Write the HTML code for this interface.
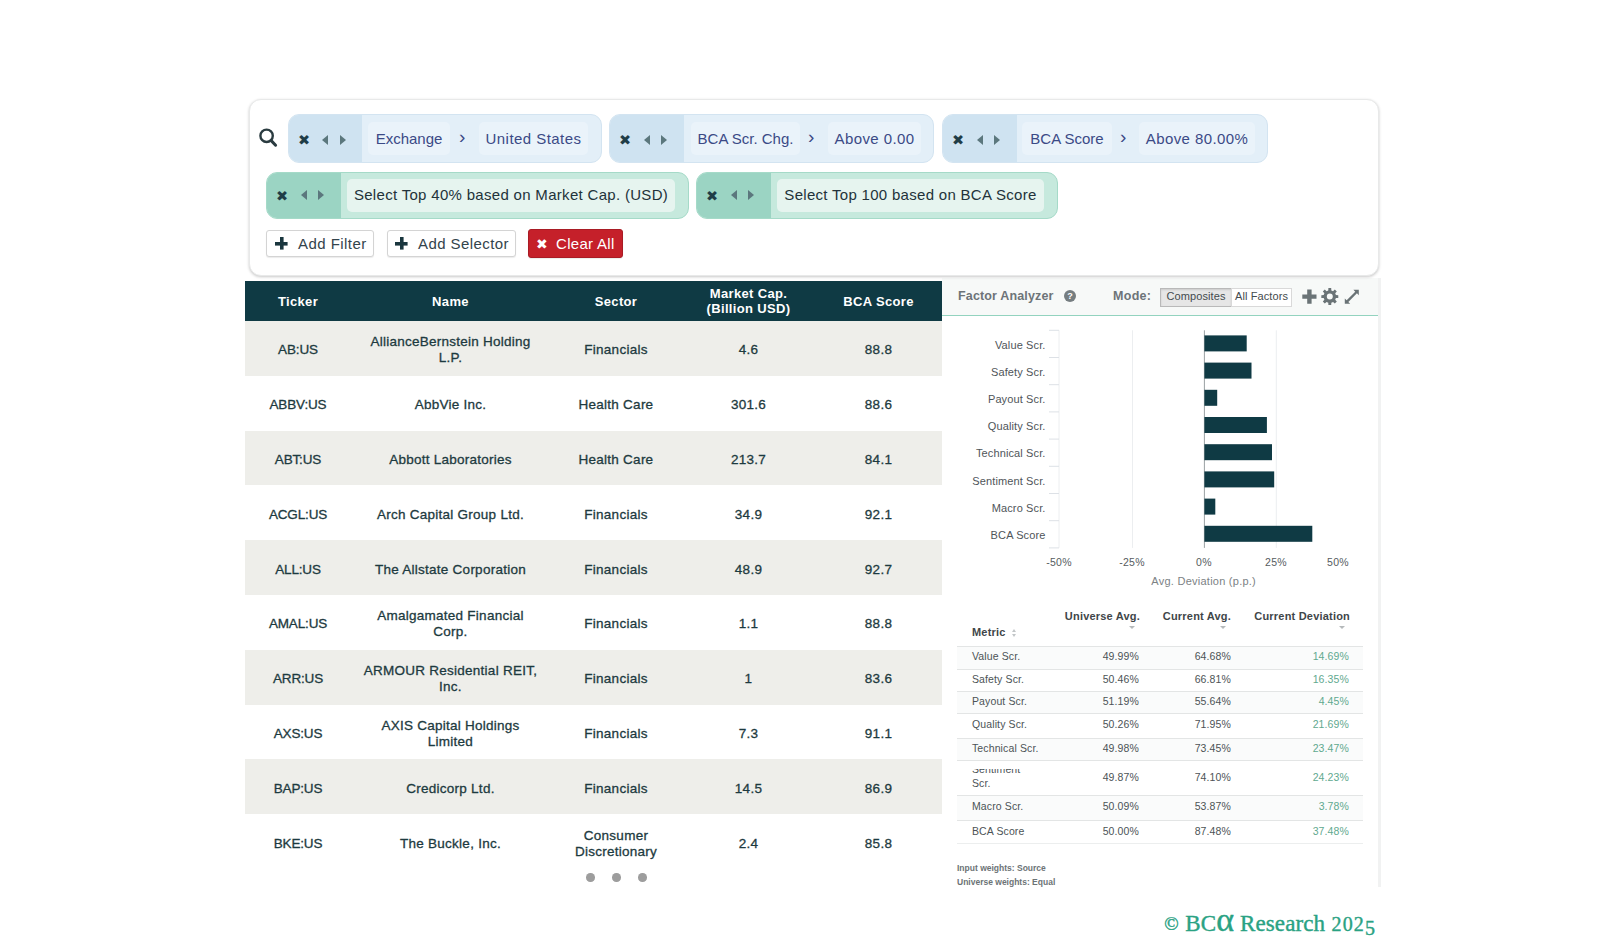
<!DOCTYPE html>
<html><head><meta charset="utf-8">
<style>
*{box-sizing:border-box;margin:0;padding:0}
html,body{width:1600px;height:949px;background:#fff;overflow:hidden}
body{position:relative;font-family:"Liberation Sans",sans-serif;color:#1d3a40}
.abs{position:absolute}
#fpanel{left:249px;top:99px;width:1130px;height:177px;border:1px solid #e8e9e9;border-radius:12px;background:#fff;box-shadow:0 1px 3px rgba(0,0,0,.22)}
.pill{position:absolute;height:49px;border-radius:11px;overflow:hidden}
.pill.b{background:#e3eff8;border:1px solid #d3e4f1}
.pill.g{background:#c6e9dd;border:1px solid #a5dac8;height:47px}.pill.g .chip{top:6px;line-height:31px}.pill.g .ic{line-height:47px}.pill.g .ic.tl,.pill.g .ic.tr{top:17px}
.pill .ctl{position:absolute;left:0;top:0;bottom:0}
.pill.b .ctl{background:#cfe3f1}
.pill.g .ctl{background:#9bd4c3}
.chip{position:absolute;height:33px;border-radius:5px;font-size:15px;line-height:34px;text-align:center;white-space:nowrap}
.pill.b .chip{background:#eaf3fa;color:#3b4a86}
.pill.g .chip{background:#e6f4ef;color:#22323a}
.sep{position:absolute;color:#3b4a86;font-size:19px;line-height:31px;margin-left:-1px}
.btn{position:absolute;height:27px;border:1px solid #d4d4d4;border-radius:3px;background:#fff;font-size:15px;line-height:25px;color:#33444c;white-space:nowrap;box-shadow:0 1px 1px rgba(0,0,0,.08)}
.btn.red{background:#c5202a;border-color:#a91b24;color:#fff;height:29px;line-height:27px}
table#main{position:absolute;left:245px;top:281px;width:697px;border-collapse:collapse;table-layout:fixed;font-size:13.5px;letter-spacing:.25px}
#main th{background:#0f3a44;color:#fff;font-weight:bold;height:40px;font-size:13px;letter-spacing:.35px;line-height:15px;text-align:center;vertical-align:middle}
#main td{height:54.8px;padding-top:4px;text-align:center;vertical-align:middle;line-height:16px;color:#1d3a40;-webkit-text-stroke:.3px #1d3a40}
#main tr:nth-child(even) td{background:#eeeeea}
#main td:first-child{letter-spacing:-.15px}

.ic{position:absolute;top:0;height:47px;line-height:51px;font-size:14.5px;color:#1f3d47}
.ic.x{font-family:"DejaVu Sans",sans-serif}
.ic.tl,.ic.tr{top:20px;width:0;height:0;border-top:5.5px solid transparent;border-bottom:5.5px solid transparent}
.ic.tl{border-right:6.5px solid #5b777d}
.ic.tr{border-left:6.5px solid #5b777d}
.pill .chip{top:7px}
.pill .sep{top:6px}
.bt{position:absolute;top:0}
.plus{position:absolute;top:6px;width:13px;height:13px;background:linear-gradient(#1a363e,#1a363e) center/12.6px 3.6px no-repeat,linear-gradient(#1a363e,#1a363e) center/3.6px 12.6px no-repeat}

.rh{font-size:12.5px;font-weight:bold;color:#6d7478;line-height:16px;white-space:nowrap}
.qm{width:12px;height:12px;border-radius:50%;background:#757d80;color:#fff;font-size:9px;font-weight:bold;line-height:12px;text-align:center}
.mb{height:19px;border:1px solid #d9d9d9;background:#fff;font-size:11px;letter-spacing:.1px;line-height:15px;text-align:center;color:#444b4e;white-space:nowrap}
.mb.on{background:#e6e6e6;border-color:#b9b9b9;box-shadow:inset 0 1px 2px rgba(0,0,0,.12)}
#ftab{font-size:10.5px;letter-spacing:.12px;color:#4c5356}
#ftab span{position:absolute;white-space:nowrap}
.fh{font-weight:bold;font-size:11px;letter-spacing:.2px;color:#3f4649;line-height:13px}
.clip{position:absolute;left:0;top:8px;width:120px;height:26px;overflow:hidden}
.clip .c0{left:15px}
.fr{position:absolute;left:0;right:0;border-top:1px solid #e3e5e5}
.fr.odd{background:#fafbfb}
.fr .c0{left:15px}.fr .c1{right:224px}.fr .c2{right:132px}.fr .c3{right:14px;color:#5fa98f}
#ftab{border-bottom:0}
.ca{position:absolute;right:5px;top:16px;border-left:3px solid transparent;border-right:3px solid transparent;border-top:3px solid #b5b9bb}
.so{display:inline-block;position:relative;width:6px;height:8px;margin-left:3px;top:1px}
.so:before,.so:after{content:'';position:absolute;left:0;border-left:2.5px solid transparent;border-right:2.5px solid transparent}
.so:before{top:0;border-bottom:3px solid #c2c6c8}
.so:after{top:4.5px;border-top:3px solid #c2c6c8}
.fn{font-size:8.5px;font-weight:bold;color:#6c7376;line-height:11px;white-space:nowrap}
.dot{width:8.6px;height:8.6px;border-radius:50%;background:#9d9d9d}
#foot{font-family:"Liberation Serif",serif;font-size:23px;letter-spacing:.1px;word-spacing:.6px;line-height:30px;color:#2aa283;white-space:nowrap;-webkit-text-stroke:.4px #2aa283}
#foot .cp{font-size:19px;position:relative;top:-1px}
#foot .al{font-size:34px;line-height:0;letter-spacing:-.5px}
#foot .os{font-size:20px;letter-spacing:1.1px}
#foot .d5{position:relative;top:4px}
</style></head><body>
<div class="abs" id="rpanel" style="left:942px;top:278px;width:439px;height:609px;border-right:3px solid #f1f2f2;background:#fff"></div>
<div class="abs" id="rhead" style="left:942px;top:278px;width:436px;height:38px;background:#f7f9f8;border-bottom:1.5px solid #93d3bf"></div>
<div id="fpanel" class="abs"></div>
<svg class="abs" style="left:258px;top:127px" width="20" height="21" viewBox="0 0 20 21"><circle cx="8.6" cy="8.8" r="6.2" fill="none" stroke="#2a3b40" stroke-width="2.4"/><path d="M13.2 13.6 L17.6 18.2" stroke="#2a3b40" stroke-width="3" stroke-linecap="round"/></svg>

<div class="pill b" style="left:288px;top:114px;width:314px"><div class="ctl" style="width:73px"></div>
<span class="ic x" style="left:9px">&#10006;</span><span class="ic tl" style="left:33px"></span><span class="ic tr" style="left:51px"></span>
<div class="chip" style="left:79px;width:82px"><span style="letter-spacing:0">Exchange</span></div><span class="sep" style="left:171px">&#8250;</span>
<div class="chip" style="left:190px;width:109px"><span style="letter-spacing:.45px">United States</span></div></div>

<div class="pill b" style="left:609px;top:114px;width:325px"><div class="ctl" style="width:74px"></div>
<span class="ic x" style="left:9px">&#10006;</span><span class="ic tl" style="left:34px"></span><span class="ic tr" style="left:51px"></span>
<div class="chip" style="left:81px;width:109px"><span>BCA Scr. Chg.</span></div><span class="sep" style="left:199px">&#8250;</span>
<div class="chip" style="left:218px;width:93px"><span style="letter-spacing:.4px">Above 0.00</span></div></div>

<div class="pill b" style="left:942px;top:114px;width:326px"><div class="ctl" style="width:74px"></div>
<span class="ic x" style="left:9px">&#10006;</span><span class="ic tl" style="left:34px"></span><span class="ic tr" style="left:51px"></span>
<div class="chip" style="left:79px;width:90px"><span>BCA Score</span></div><span class="sep" style="left:178px">&#8250;</span>
<div class="chip" style="left:196px;width:116px"><span style="letter-spacing:.4px">Above 80.00%</span></div></div>

<div class="pill g" style="left:266px;top:172px;width:423px"><div class="ctl" style="width:74px"></div>
<span class="ic x" style="left:9px">&#10006;</span><span class="ic tl" style="left:34px"></span><span class="ic tr" style="left:51px"></span>
<div class="chip" style="left:80px;width:328px"><span style="letter-spacing:.31px">Select Top 40% based on Market Cap. (USD)</span></div></div>

<div class="pill g" style="left:696px;top:172px;width:362px"><div class="ctl" style="width:74px"></div>
<span class="ic x" style="left:9px">&#10006;</span><span class="ic tl" style="left:34px"></span><span class="ic tr" style="left:51px"></span>
<div class="chip" style="left:80px;width:267px"><span style="letter-spacing:.3px">Select Top 100 based on BCA Score</span></div></div>

<div class="btn" style="left:266px;top:230px;width:108px"><span class="plus" style="left:8px"></span><span class="bt" style="left:31px;letter-spacing:.45px">Add Filter</span></div>
<div class="btn" style="left:387px;top:230px;width:129px"><span class="plus" style="left:7px"></span><span class="bt" style="left:30px;letter-spacing:.42px">Add Selector</span></div>
<div class="btn red" style="left:528px;top:229px;width:95px"><span class="bt" style="left:7px;top:1px;font-size:14px;font-family:DejaVu Sans,sans-serif">&#10006;</span><span class="bt" style="left:27px;letter-spacing:.3px">Clear All</span></div>


<span class="abs rh" style="left:958px;top:288px;letter-spacing:.15px">Factor Analyzer</span>
<span class="abs qm" style="left:1064px;top:290px">?</span>
<span class="abs rh" style="left:1113px;top:288px;letter-spacing:.3px">Mode:</span>
<div class="abs mb on" style="left:1160px;top:288px;width:72px">Composites</div>
<div class="abs mb" style="left:1231px;top:288px;width:61px">All Factors</div>
<svg class="abs" style="left:1301px;top:288px" width="60" height="18" viewBox="0 0 60 18" fill="#6a7376">
<path d="M6.2 1.5h4.400v4.900h4.900v4.400h-4.900v4.900h-4.400v-4.900H1.300v-4.400h4.900z"/>
<path d="M34.91 7.08 L37.28 7.19 L37.28 10.01 L34.91 10.12 L34.20 11.85 L35.80 13.60 L33.80 15.60 L32.05 14.00 L30.32 14.71 L30.21 17.08 L27.39 17.08 L27.28 14.71 L25.55 14.00 L23.80 15.60 L21.80 13.60 L23.40 11.85 L22.69 10.12 L20.32 10.01 L20.32 7.19 L22.69 7.08 L23.40 5.35 L21.80 3.60 L23.80 1.60 L25.55 3.20 L27.28 2.49 L27.39 0.12 L30.21 0.12 L30.32 2.49 L32.05 3.20 L33.80 1.60 L35.80 3.60 L34.20 5.35Z M31.80 8.60 a3.0 3.0 0 1 0 -6.0 0 a3.0 3.0 0 1 0 6.0 0Z" fill-rule="evenodd"/>
<path d="M52.4 1.800h5.400v5.400l-1.850-1.850-8.600 8.600 1.850 1.850h-5.400v-5.400l1.850 1.850 8.600-8.600z"/>
</svg>
<svg class="abs" id="chart" style="left:942px;top:316px" width="436" height="280" viewBox="0 0 436 280" font-family="Liberation Sans, sans-serif">
<line x1="117" y1="14.3" x2="117" y2="231.9" stroke="#eceef0" stroke-width="1"/>
<line x1="190.5" y1="14.3" x2="190.5" y2="231.9" stroke="#eceef0" stroke-width="1"/>
<line x1="334.29999999999995" y1="14.3" x2="334.29999999999995" y2="231.9" stroke="#eceef0" stroke-width="1"/>
<line x1="107" y1="14.3" x2="117" y2="14.3" stroke="#dde1e6" stroke-width="1"/>
<line x1="107" y1="41.5" x2="117" y2="41.5" stroke="#dde1e6" stroke-width="1"/>
<line x1="107" y1="68.7" x2="117" y2="68.7" stroke="#dde1e6" stroke-width="1"/>
<line x1="107" y1="95.9" x2="117" y2="95.9" stroke="#dde1e6" stroke-width="1"/>
<line x1="107" y1="123.1" x2="117" y2="123.1" stroke="#dde1e6" stroke-width="1"/>
<line x1="107" y1="150.3" x2="117" y2="150.3" stroke="#dde1e6" stroke-width="1"/>
<line x1="107" y1="177.5" x2="117" y2="177.5" stroke="#dde1e6" stroke-width="1"/>
<line x1="107" y1="204.7" x2="117" y2="204.7" stroke="#dde1e6" stroke-width="1"/>
<line x1="107" y1="231.9" x2="117" y2="231.9" stroke="#dde1e6" stroke-width="1"/>
<line x1="262.4" y1="14.3" x2="262.4" y2="231.9" stroke="#9aa0a3" stroke-width="1"/>
<rect x="262.4" y="19.4" width="42.3" height="16" fill="#0f3a44"/>
<text x="103.5" y="32.5" text-anchor="end" font-size="11" letter-spacing=".12" fill="#4f5559">Value Scr.</text>
<rect x="262.4" y="46.6" width="47.1" height="16" fill="#0f3a44"/>
<text x="103.5" y="59.7" text-anchor="end" font-size="11" letter-spacing=".12" fill="#4f5559">Safety Scr.</text>
<rect x="262.4" y="73.8" width="12.8" height="16" fill="#0f3a44"/>
<text x="103.5" y="86.9" text-anchor="end" font-size="11" letter-spacing=".12" fill="#4f5559">Payout Scr.</text>
<rect x="262.4" y="101.0" width="62.5" height="16" fill="#0f3a44"/>
<text x="103.5" y="114.1" text-anchor="end" font-size="11" letter-spacing=".12" fill="#4f5559">Quality Scr.</text>
<rect x="262.4" y="128.2" width="67.6" height="16" fill="#0f3a44"/>
<text x="103.5" y="141.3" text-anchor="end" font-size="11" letter-spacing=".12" fill="#4f5559">Technical Scr.</text>
<rect x="262.4" y="155.4" width="69.8" height="16" fill="#0f3a44"/>
<text x="103.5" y="168.5" text-anchor="end" font-size="11" letter-spacing=".12" fill="#4f5559">Sentiment Scr.</text>
<rect x="262.4" y="182.6" width="10.9" height="16" fill="#0f3a44"/>
<text x="103.5" y="195.7" text-anchor="end" font-size="11" letter-spacing=".12" fill="#4f5559">Macro Scr.</text>
<rect x="262.4" y="209.8" width="107.9" height="16" fill="#0f3a44"/>
<text x="103.5" y="222.9" text-anchor="end" font-size="11" letter-spacing=".12" fill="#4f5559">BCA Score</text>
<text x="117" y="250.3" text-anchor="middle" font-size="10.5" letter-spacing=".3" fill="#565c60">-50%</text>
<text x="190" y="250.3" text-anchor="middle" font-size="10.5" letter-spacing=".3" fill="#565c60">-25%</text>
<text x="262" y="250.3" text-anchor="middle" font-size="10.5" letter-spacing=".3" fill="#565c60">0%</text>
<text x="334" y="250.3" text-anchor="middle" font-size="10.5" letter-spacing=".3" fill="#565c60">25%</text>
<text x="396" y="250.3" text-anchor="middle" font-size="10.5" letter-spacing=".3" fill="#565c60">50%</text>
<text x="261.7" y="268.5" text-anchor="middle" font-size="11" letter-spacing=".25" fill="#7c8285">Avg. Deviation (p.p.)</text>
</svg>
<div id="ftab" class="abs" style="left:957px;top:600px;width:406px;height:250px">
<span class="fh" style="left:15px;top:26px">Metric <i class="so"></i></span>
<span class="fh r" style="right:223px;top:10px">Universe Avg.<i class="ca"></i></span>
<span class="fh r" style="right:132px;top:10px">Current Avg.<i class="ca"></i></span>
<span class="fh r" style="right:13px;top:10px">Current Deviation<i class="ca"></i></span>
<div class="fr odd" style="top:46px;height:22.5px;line-height:19.5px"><span class="c0">Value Scr.</span><span class="c1">49.99%</span><span class="c2">64.68%</span><span class="c3">14.69%</span></div>
<div class="fr" style="top:68.5px;height:22.5px;line-height:19.5px"><span class="c0">Safety Scr.</span><span class="c1">50.46%</span><span class="c2">66.81%</span><span class="c3">16.35%</span></div>
<div class="fr odd" style="top:91px;height:22px;line-height:19px"><span class="c0">Payout Scr.</span><span class="c1">51.19%</span><span class="c2">55.64%</span><span class="c3">4.45%</span></div>
<div class="fr" style="top:113px;height:24.5px;line-height:21.5px"><span class="c0">Quality Scr.</span><span class="c1">50.26%</span><span class="c2">71.95%</span><span class="c3">21.69%</span></div>
<div class="fr odd" style="top:137.5px;height:22.5px;line-height:19.5px"><span class="c0">Technical Scr.</span><span class="c1">49.98%</span><span class="c2">73.45%</span><span class="c3">23.47%</span></div>
<div class="fr" style="top:160px;height:35px;line-height:32px"><div class="clip"><span class="c0" style="line-height:14px;top:-7px">Sentiment<br>Scr.</span></div><span class="c1">49.87%</span><span class="c2">74.10%</span><span class="c3">24.23%</span></div>
<div class="fr odd" style="top:195px;height:24.5px;line-height:21.5px"><span class="c0">Macro Scr.</span><span class="c1">50.09%</span><span class="c2">53.87%</span><span class="c3">3.78%</span></div>
<div class="fr" style="top:219.5px;height:23.0px;line-height:20.0px"><span class="c0">BCA Score</span><span class="c1">50.00%</span><span class="c2">87.48%</span><span class="c3">37.48%</span></div>
<div class="fr" style="top:242.5px;height:1px;border-top-color:#eceeee"></div>
</div>
<span class="abs fn" style="left:957px;top:863px">Input weights: Source</span>
<span class="abs fn" style="left:957px;top:877px">Universe weights: Equal</span>
<div class="abs dot" style="left:586px;top:873px"></div><div class="abs dot" style="left:612px;top:873px"></div><div class="abs dot" style="left:638px;top:873px"></div>
<div class="abs" id="foot" style="left:1150px;top:908.5px;width:226px;text-align:right"><span class="cp">&#169;</span> BC<span class="al">&#945;</span> Research <span class="os">202<span class="d5">5</span></span></div>

<table id="main">
<colgroup><col style="width:106px"><col style="width:199px"><col style="width:132px"><col style="width:133px"><col style="width:127px"></colgroup>
<tr><th>Ticker</th><th>Name</th><th>Sector</th><th>Market Cap.<br>(Billion USD)</th><th>BCA Score</th></tr>
<tr><td>AB:US</td><td>AllianceBernstein Holding<br>L.P.</td><td>Financials</td><td>4.6</td><td>88.8</td></tr>
<tr><td>ABBV:US</td><td>AbbVie Inc.</td><td>Health Care</td><td>301.6</td><td>88.6</td></tr>
<tr><td>ABT:US</td><td>Abbott Laboratories</td><td>Health Care</td><td>213.7</td><td>84.1</td></tr>
<tr><td>ACGL:US</td><td>Arch Capital Group Ltd.</td><td>Financials</td><td>34.9</td><td>92.1</td></tr>
<tr><td>ALL:US</td><td>The Allstate Corporation</td><td>Financials</td><td>48.9</td><td>92.7</td></tr>
<tr><td>AMAL:US</td><td>Amalgamated Financial<br>Corp.</td><td>Financials</td><td>1.1</td><td>88.8</td></tr>
<tr><td>ARR:US</td><td>ARMOUR Residential REIT,<br>Inc.</td><td>Financials</td><td>1</td><td>83.6</td></tr>
<tr><td>AXS:US</td><td>AXIS Capital Holdings<br>Limited</td><td>Financials</td><td>7.3</td><td>91.1</td></tr>
<tr><td>BAP:US</td><td>Credicorp Ltd.</td><td>Financials</td><td>14.5</td><td>86.9</td></tr>
<tr><td>BKE:US</td><td>The Buckle, Inc.</td><td>Consumer<br>Discretionary</td><td>2.4</td><td>85.8</td></tr>
</table>
</body></html>
